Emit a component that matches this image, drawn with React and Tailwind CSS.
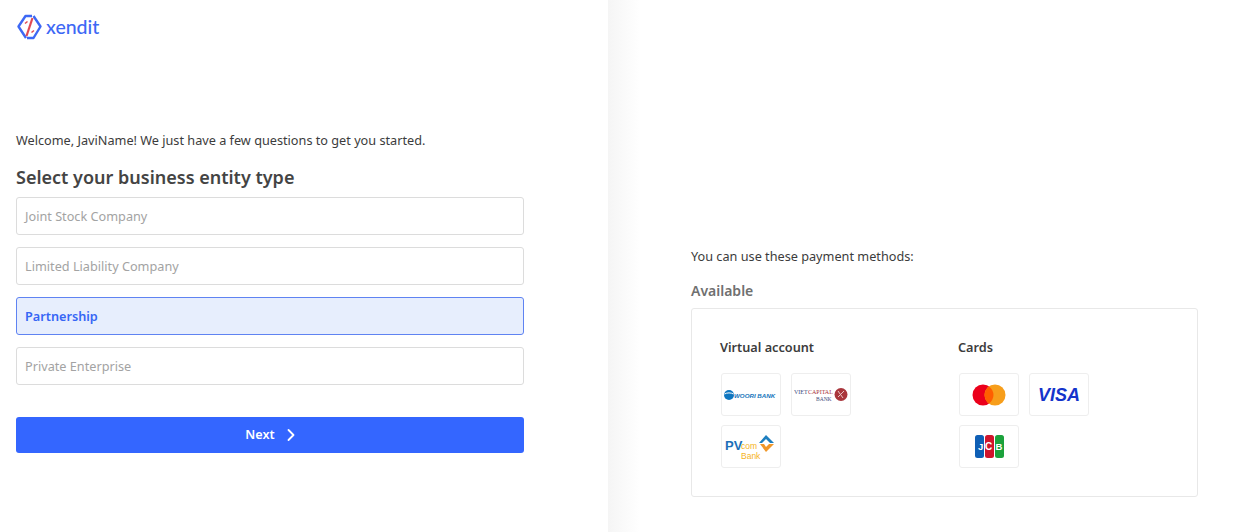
import { ChevronRight } from 'lucide-react'

const options = ['Joint Stock Company', 'Limited Liability Company', 'Partnership', 'Private Enterprise']

function XenditLogo() {
  return (
    <svg width="25" height="26" viewBox="0 0 25 26" fill="none" className="shrink-0">
      <path d="M15 2H8.500L1.500 12.500L9 24" stroke="#3d68f5" strokeWidth="2.400" strokeLinejoin="round" />
      <path d="M10 24H16.500L23.500 12.500L16.500 2" stroke="#3d68f5" strokeWidth="2.400" strokeLinejoin="round" />
      <path d="M15.500 4L9.500 22" stroke="#e04a55" strokeWidth="2.200" />
      <path d="M8 9.500L10.500 7.500M17 16.500L14.500 18.500" stroke="#e04a55" strokeWidth="1.600" />
    </svg>
  )
}

function WooriLogo() {
  return (
    <svg width="54" height="12" viewBox="0 0 54 12">
      <circle cx="5" cy="6" r="5" fill="#0f76c0" />
      <path d="M0.500 5C3 3.500 7 3.500 9.500 5" stroke="#fff" strokeWidth="1" fill="none" />
      <text x="10" y="8.500" fontSize="6.200" fontWeight="700" fontStyle="italic" fill="#1474bb" fontFamily="'Liberation Sans', sans-serif">WOORI BANK</text>
    </svg>
  )
}

function VietCapitalLogo() {
  return (
    <svg width="54" height="15" viewBox="0 0 54 15">
      <text x="0" y="7" fontSize="6" fill="#3f4d7d" fontFamily="'Liberation Serif', serif">VIET</text>
      <text x="14" y="7" fontSize="6" fill="#a8323a" fontFamily="'Liberation Serif', serif">CAPITAL</text>
      <text x="22" y="13.500" fontSize="5.500" fill="#3f4d7d" fontFamily="'Liberation Serif', serif">BANK</text>
      <circle cx="47" cy="7.500" r="6.500" fill="#a9363c" />
      <path d="M44 4L49 11M50 4L44 10" stroke="#e8c4c4" strokeWidth="1" />
    </svg>
  )
}

function PvcomLogo() {
  return (
    <svg width="52" height="28" viewBox="0 0 52 28">
      <text x="0" y="17" fontSize="13" fontWeight="700" fill="#1d6fb8" fontFamily="'Liberation Sans', sans-serif">PV</text>
      <text x="16" y="16" fontSize="8.500" fill="#f5b324" fontFamily="'Liberation Sans', sans-serif">com</text>
      <text x="16" y="26" fontSize="8.500" fill="#f5b324" fontFamily="'Liberation Sans', sans-serif">Bank</text>
      <path d="M41 2L49 10H45L41 6L37 10H34Z" fill="#1d7fc0" />
      <path d="M35 11H39L41 14L44 11H49L41 19Z" fill="#f0972a" />
    </svg>
  )
}

function MastercardLogo() {
  return (
    <svg width="34" height="22" viewBox="0 0 34 22">
      <circle cx="11" cy="11" r="10.500" fill="#eb001b" />
      <circle cx="23" cy="11" r="10.500" fill="#f79e1b" />
      <path d="M17 2.400a10.500 10.500 0 0 1 0 17.200a10.500 10.500 0 0 1 0-17.200Z" fill="#ff5f00" />
    </svg>
  )
}

function JcbLogo() {
  return (
    <svg width="29" height="23" viewBox="0 0 29 23">
      <rect x="0" y="0" width="9" height="23" rx="2.500" fill="#0f5fb5" />
      <rect x="10" y="0" width="9" height="23" rx="2.500" fill="#d0142c" />
      <rect x="20" y="0" width="9" height="23" rx="2.500" fill="#1ba23c" />
      <text x="3" y="15" fontSize="9.500" fontWeight="700" fill="#fff" fontFamily="'Liberation Sans', sans-serif">J</text>
      <text x="10" y="15" fontSize="10" fontWeight="700" fill="#fff" fontFamily="'Liberation Sans', sans-serif">C</text>
      <text x="20.500" y="15" fontSize="9.500" fontWeight="700" fill="#fff" fontFamily="'Liberation Sans', sans-serif">B</text>
    </svg>
  )
}

function LogoBox({ children }) {
  return (
    <div className="w-[60px] h-[43px] flex items-center justify-center bg-white border border-[#eeeeee] rounded-[3px]">
      {children}
    </div>
  )
}

export default function App() {
  return (
    <div className="flex w-[1239px] h-[532px] overflow-hidden bg-white text-[#3d3d3d] font-['Noto_Sans','Open_Sans',sans-serif]">
      {/* Left form */}
      <div className="w-[608px] shrink-0 pl-4 pt-[14px]">
        <div className="flex items-center gap-1 pl-px">
          <XenditLogo />
          <span className="text-[19.5px] leading-[26px] font-medium text-[#3d68f5] font-['Lato',sans-serif]">xendit</span>
        </div>

        <p className="mt-[90px] text-[12.7px] leading-5 text-[#3c3c3c]">Welcome, JaviName! We just have a few questions to get you started.</p>
        <h1 className="mt-[15px] text-[18px] leading-6 font-semibold text-[#444444]">Select your business entity type</h1>

        <div className="mt-2 w-[508px] flex flex-col gap-3">
          {options.map((o) => (
            o === 'Partnership' ? (
              <div key={o} className="h-[38px] flex items-center pt-px px-2 rounded-[3px] border border-[#5f83f2] bg-[#e7eefd] text-[12.7px] font-semibold text-[#3666f5]">{o}</div>
            ) : (
              <div key={o} className="h-[38px] flex items-center pt-px px-2 rounded-[3px] border border-[#dcdcdc] bg-white text-[12.7px] text-[#a3a3a3]">{o}</div>
            )
          ))}
        </div>

        <button className="mt-8 w-[508px] h-[36px] flex items-center justify-center gap-[6px] pl-[6px] rounded-[3px] bg-[#3466ff] text-[12.6px] font-semibold text-white">
          Next
          <ChevronRight size={20} strokeWidth={2.2} />
        </button>
      </div>

      {/* Right side */}
      <div className="flex-1 pl-[83px] pt-[246px] pr-[41px] bg-gradient-to-r from-[#f5f5f5] to-white to-[32px]">
        <p className="text-[12.7px] leading-5 text-[#3c3c3c]">You can use these payment methods:</p>
        <h2 className="mt-[15px] text-sm leading-5 font-semibold text-[#707070]">Available</h2>
        <div className="mt-[7px] h-[189px] bg-white border border-[#e8e8e8] rounded-[3px] pl-[28px] pt-[28px] flex">
          <div className="w-[238px]">
            <h3 className="text-[12.7px] leading-5 font-semibold text-[#3c3c3c]">Virtual account</h3>
            <div className="mt-4 ml-px flex flex-wrap gap-x-[10px] gap-y-[9px] w-[140px]">
              <LogoBox><WooriLogo /></LogoBox>
              <LogoBox><VietCapitalLogo /></LogoBox>
              <LogoBox><PvcomLogo /></LogoBox>
            </div>
          </div>
          <div>
            <h3 className="text-[12.7px] leading-5 font-semibold text-[#3c3c3c]">Cards</h3>
            <div className="mt-4 ml-px flex flex-wrap gap-x-[10px] gap-y-[9px] w-[140px]">
              <LogoBox><MastercardLogo /></LogoBox>
              <LogoBox>
                <span className="text-[18px] leading-none font-bold italic text-[#1434cb] font-['Liberation_Sans',sans-serif]">VISA</span>
              </LogoBox>
              <LogoBox><JcbLogo /></LogoBox>
            </div>
          </div>
        </div>
      </div>
    </div>
  )
}
